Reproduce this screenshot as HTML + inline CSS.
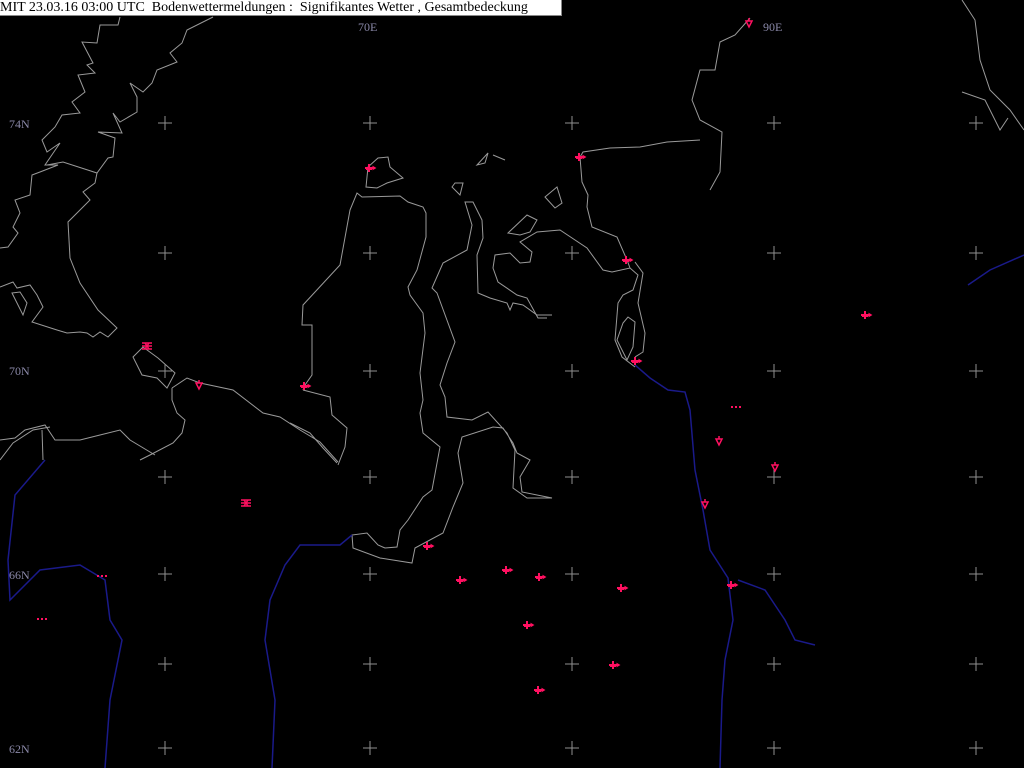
<!DOCTYPE html>
<html><head><meta charset="utf-8"><style>
html,body{margin:0;padding:0;background:#000;width:1024px;height:768px;overflow:hidden}
#hdr{position:absolute;left:0;top:0;width:561px;height:15px;background:#fff;border-bottom:1px solid #888;border-right:1px solid #888;font:14px/15px "Liberation Serif",serif;color:#000;white-space:pre;overflow:hidden}
svg{position:absolute;left:0;top:0}
</style></head><body>
<svg width="1024" height="768" viewBox="0 0 1024 768">
<rect width="1024" height="768" fill="#000"/>
<g fill="none" stroke="#9a9a9a" stroke-width="1">
<polyline points="120,17 118,25 100,25 97,43 82,42 93,63 87,65 95,73 78,75 85,92 72,102 80,113 62,115 55,127 42,140 47,152 60,143 45,165 58,165 40,172 32,175 30,195 15,200 20,213 13,227 18,233 8,247 0,248"/>
<polyline points="213,17 187,30 182,43 170,53 177,62 157,70 152,83 143,92 130,83 137,97 137,112 120,122 113,113 122,133 98,132 115,138 113,157 108,158 97,173 63,162 47,165"/>
<polyline points="97,173 95,183 83,192 90,200 78,212 68,222 70,258 80,283 98,310 117,328 108,337 100,332 93,337 87,333 80,332 67,333 57,330 32,322 43,307 37,295 30,285 17,288 13,282 0,287"/>
<polygon points="12,293 20,292 27,303 23,315"/>
<polygon points="133,357 143,347 158,358 175,373 167,388 157,378 142,375"/>
<polyline points="172,388 187,378 200,383 233,390 263,413 280,417 300,430 320,442 338,462"/>
<polyline points="172,388 172,400 177,413 185,420 182,433 173,443 150,455 140,460"/>
<polyline points="50,427 33,430 13,443 0,460"/>
<polyline points="42,430 43,460"/>
<polyline points="290,423 310,433 323,448 337,463"/>
<polyline points="303,390 330,397 332,415 347,428 345,447 338,465"/>
<polyline points="303,390 305,385 312,375 312,325 302,325 303,305 340,265 350,210 357,193 362,197 400,196 408,202 423,207 426,213 426,237 417,270 408,287 410,295 423,313 425,333 420,373 423,400 420,413 423,433 440,447 432,490 423,497 408,520 400,530 397,547 385,548 378,545 367,533 352,535 353,548 380,558 412,563 415,548 443,533 453,507 463,483 458,453 462,437 493,427 503,428 513,443 517,453 530,460 520,477 522,492 552,498 527,498 513,488 515,450 507,433 488,412 472,420 447,417 445,397 440,385 447,363 455,342 437,293 432,288 443,263 467,250 472,225 465,202 473,202 482,220 483,238 477,255 478,293 490,298 507,303 510,310 513,303 523,305 537,315 552,315"/>
<polyline points="547,318 538,318 527,298 517,295 498,282 493,268 495,255 510,253 520,263 530,262 532,252 520,242 537,232 560,230 587,248 603,270 612,272 630,268 638,275 633,290 623,295 618,303 615,340 622,357 635,367"/>
<polyline points="630,268 627,260 617,237 592,227 587,207 588,195 582,182 580,157 583,152 610,148 640,147 667,142 700,140"/>
<polyline points="635,262 643,273 638,303 645,333 643,352 635,357"/>
<polygon points="628,317 635,322 633,347 627,360 617,340 623,323"/>
<polygon points="368,167 378,158 388,157 390,167 403,178 387,183 377,188 366,187"/>
<polygon points="477,165 488,153 485,163"/>
<polyline points="493,155 505,160"/>
<polygon points="452,187 455,183 463,183 460,195"/>
<polygon points="545,197 557,187 562,203 555,208"/>
<polygon points="508,233 527,215 537,220 530,232 520,235"/>
<polyline points="750,18 735,35 720,42 715,70 700,70 692,100 700,120 722,132 720,172 710,190"/>
<polyline points="962,0 975,20 980,60 990,90 1010,110 1024,130"/>
<polyline points="962,92 985,100 1000,130 1008,118"/>
<polyline points="0,440 15,438 25,430 45,425 55,440 80,440 100,435 120,430 130,440 155,455"/>
</g>
<g fill="none" stroke="#1a1a8a" stroke-width="1.5">
<polyline points="635,365 650,378 668,390 685,392 690,410 695,470 703,510 710,550 728,578 733,620 725,660 722,700 720,768"/>
<polyline points="738,580 765,590 785,620 795,640 815,645"/>
<polyline points="352,535 340,545 300,545 285,565 270,600 265,640 275,700 272,768"/>
<polyline points="45,460 15,495 8,560 10,600 40,570 80,565 105,580 110,620 122,640 110,700 105,768"/>
<polyline points="968,285 990,270 1024,255"/>
</g>
<g stroke="#909090" stroke-width="1">
<path d="M158,123h14M165,116v14M363,123h14M370,116v14M565,123h14M572,116v14M767,123h14M774,116v14M969,123h14M976,116v14
M158,253h14M165,246v14M363,253h14M370,246v14M565,253h14M572,246v14M767,253h14M774,246v14M969,253h14M976,246v14
M158,371h14M165,364v14M363,371h14M370,364v14M565,371h14M572,364v14M767,371h14M774,364v14M969,371h14M976,364v14
M158,477h14M165,470v14M363,477h14M370,470v14M565,477h14M572,470v14M767,477h14M774,470v14M969,477h14M976,470v14
M158,574h14M165,567v14M363,574h14M370,567v14M565,574h14M572,567v14M767,574h14M774,567v14M969,574h14M976,567v14
M158,664h14M165,657v14M363,664h14M370,657v14M565,664h14M572,657v14M767,664h14M774,657v14M969,664h14M976,657v14
M158,748h14M165,741v14M363,748h14M370,741v14M565,748h14M572,741v14M767,748h14M774,741v14M969,748h14M976,741v14"/>
</g>
<g font-family="Liberation Serif,serif" font-size="12" fill="#8a88a8">
<text x="358" y="31">70E</text><text x="763" y="31">90E</text>
<text x="9" y="128">74N</text><text x="9" y="375">70N</text><text x="9" y="579">66N</text><text x="9" y="753">62N</text>
</g>
<defs>
<g id="p"><path d="M-4,0h8M0,-4v8M-3,1h6M4,0l2,0" stroke-width="2"/><path d="M4,-1.5l2.5,1.5l-2.5,1.5z"/></g>
<g id="d"><path d="M-3,-3h6l-3,6z" fill="none" stroke-width="1.5"/><path d="M0,-6v3" stroke-width="1.5"/></g>
<g id="e"><path d="M-5,-3h10M-5,3h10M-5,0h10M-2,-3l4,6M2,-3l-4,6" stroke-width="1.5"/></g>
</defs>
<g fill="#ff1060" stroke="#ff1060">
<use href="#p" x="579" y="157"/><use href="#p" x="626" y="260"/><use href="#p" x="635" y="361"/>
<use href="#p" x="369" y="168"/><use href="#p" x="304" y="386"/><use href="#p" x="427" y="546"/>
<use href="#p" x="460" y="580"/><use href="#p" x="506" y="570"/><use href="#p" x="539" y="577"/>
<use href="#p" x="621" y="588"/><use href="#p" x="527" y="625"/><use href="#p" x="613" y="665"/>
<use href="#p" x="538" y="690"/><use href="#p" x="731" y="585"/><use href="#p" x="865" y="315"/>
<use href="#d" x="719" y="442"/><use href="#d" x="775" y="468"/><use href="#d" x="705" y="505"/>
<use href="#d" x="199" y="386"/><use href="#d" x="749" y="24"/>
<use href="#e" x="147" y="346"/><use href="#e" x="246" y="503"/>
<path d="M731,407h10M97,576h10M37,619h10" stroke-width="2" stroke-dasharray="2,2"/>
</g>
</svg>
<div id="hdr">MIT 23.03.16 03:00 UTC  Bodenwettermeldungen :  Signifikantes Wetter , Gesamtbedeckung</div>
</body></html>
